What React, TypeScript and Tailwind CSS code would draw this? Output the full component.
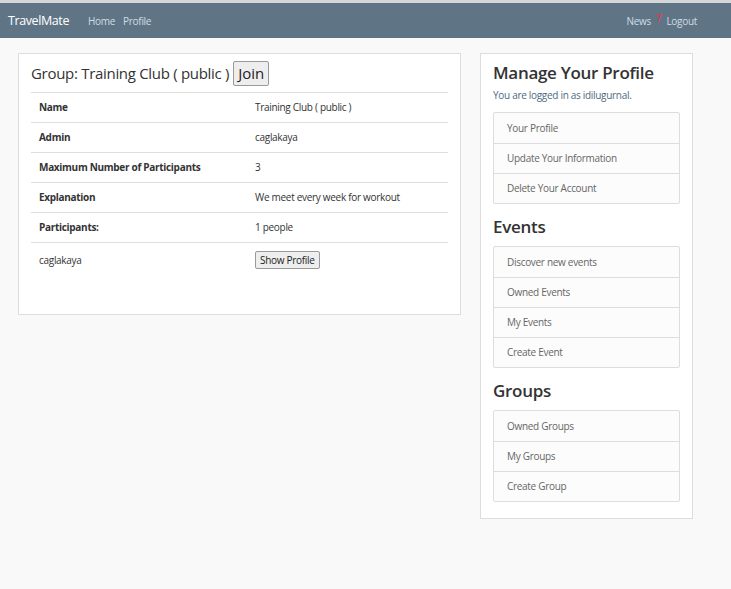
import React from "react";

const font = { fontFamily: '"Open Sans", "Noto Sans", sans-serif' };

const rows = [
  { label: "Name", value: "Training Club ( public )" },
  { label: "Admin", value: "caglakaya" },
  { label: "Maximum Number of Participants", value: "3" },
  { label: "Explanation", value: "We meet every week for workout" },
  { label: "Participants:", value: "1 people" },
];

const sections = [
  { title: "Manage Your Profile", sub: "You are logged in as idilugurnal.", items: ["Your Profile", "Update Your Information", "Delete Your Account"] },
  { title: "Events", items: ["Discover new events", "Owned Events", "My Events", "Create Event"] },
  { title: "Groups", items: ["Owned Groups", "My Groups", "Create Group"] },
];

function Navbar() {
  return (
    <div className="border-t-[3px] border-[#d4d6d8] bg-[#5f7586] h-[38px] flex items-center pl-[8px] pt-[1px] text-[10px] tracking-[-0.3px]">
      <span className="text-white text-[12.5px] mr-[19px] tracking-[-0.4px]">TravelMate</span>
      <a className="text-[#d0dbe3] mr-[8px]">Home</a>
      <a className="text-[#d0dbe3]">Profile</a>
      <div className="ml-auto flex items-center mr-[34px]">
        <a className="text-[#d0dbe3]">News</a>
        <sup className="text-[#ff2a36] text-[10px] mx-[5px] relative -top-[3px]">7</sup>
        <a className="text-[#d0dbe3]">Logout</a>
      </div>
    </div>
  );
}

export default function App() {
  return (
    <div className="min-h-[589px] bg-[#f9f9f9] text-[#333]" style={font}>
      <Navbar />
      <div className="flex items-start gap-[19px] pl-[18px] pt-[15px]">
        <div className="w-[443px] bg-white border border-[#dddddd] px-[12px] pt-[7px] pb-[45px]">
          <div className="flex items-center pb-[6px] border-b border-[#dddddd]">
            <span className="text-[15px] text-[#333] tracking-[-0.3px]">Group: Training Club ( public )</span>
            <button className="ml-[4px] h-[25px] px-[4px] text-[15px] leading-none bg-[#eeeeee] border border-[#9a9a9a] rounded-[2px] text-[#222]">
              Join
            </button>
          </div>
          {rows.map((r) => (
            <div key={r.label} className="flex h-[30px] items-center border-b border-[#dddddd] text-[10px] tracking-[-0.3px]">
              <div className="w-[224px] pl-[8px] font-bold">{r.label}</div>
              <div>{r.value}</div>
            </div>
          ))}
          <div className="flex pt-[8px] text-[10px] tracking-[-0.3px]">
            <div className="w-[224px] pl-[8px] pt-[2px]">caglakaya</div>
            <button className="h-[18px] px-[4px] text-[10px] leading-none bg-[#eeeeee] border border-[#9a9a9a] rounded-[2px] text-[#222]">
              Show Profile
            </button>
          </div>
        </div>
        <div className="w-[213px] bg-white border border-[#dddddd] px-[12px] pt-[7px] pb-[16px]">
          {sections.map((s, i) => (
            <div key={s.title} className={i > 0 ? "mt-[11px]" : ""}>
              <h2 className="text-[17px] font-semibold text-[#333] leading-[24px] tracking-[-0.3px]">{s.title}</h2>
              {s.sub && <p className="text-[10px] text-[#4e6b80] mt-[3px] tracking-[-0.3px]">{s.sub}</p>}
              <div className={`${s.sub ? "mt-[9px]" : "mt-[7px]"} border border-[#dddddd] rounded-[2px] bg-[#fcfcfc]`}>
                {s.items.map((it, j) => (
                  <div
                    key={it}
                    className={`h-[30px] flex items-center pl-[13px] text-[10px] text-[#666] tracking-[-0.3px] ${j > 0 ? "border-t border-[#dddddd]" : ""}`}
                  >
                    {it}
                  </div>
                ))}
              </div>
            </div>
          ))}
        </div>
      </div>
    </div>
  );
}
